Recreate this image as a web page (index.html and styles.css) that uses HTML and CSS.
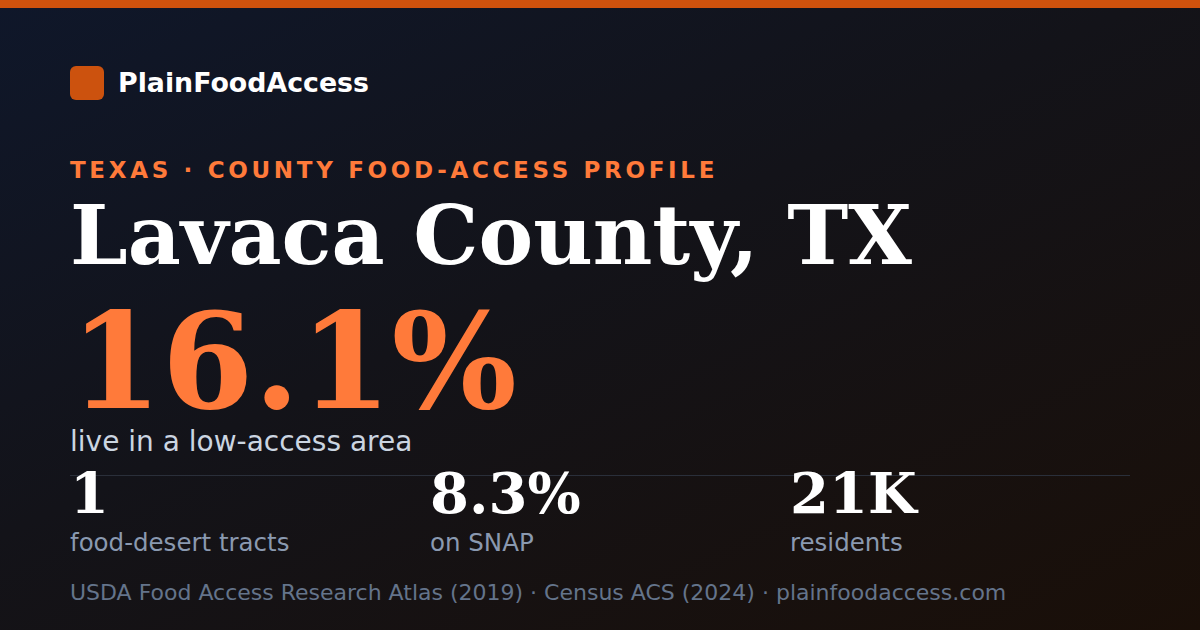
FILE: index.html
```html
<!DOCTYPE html>
<html lang="en">
<head>
<meta charset="utf-8">
<title>Lavaca County, TX – PlainFoodAccess</title>
<link rel="stylesheet" href="styles.css">
</head>
<body>
<div class="card">
  <div class="topbar"></div>
  <div class="content">
    <div class="brand">
      <div class="brand-mark"></div>
      <div class="brand-name">PlainFoodAccess</div>
    </div>
    <div class="kicker">TEXAS · COUNTY FOOD-ACCESS PROFILE</div>
    <h1 class="title">Lavaca County, TX</h1>
    <div class="hero">16.1%</div>
    <div class="hero-label">live in a low-access area</div>
    <div class="stats">
      <div class="stat">
        <div class="stat-value">1</div>
        <div class="stat-label">food-desert tracts</div>
      </div>
      <div class="stat">
        <div class="stat-value">8.3%</div>
        <div class="stat-label">on SNAP</div>
      </div>
      <div class="stat">
        <div class="stat-value">21K</div>
        <div class="stat-label">residents</div>
      </div>
    </div>
    <div class="source">USDA Food Access Research Atlas (2019) · Census ACS (2024) · plainfoodaccess.com</div>
  </div>
</div>
</body>
</html>
```

FILE: styles.css
```css
html, body {
  margin: 0;
  padding: 0;
}
body {
  width: 1200px;
  height: 630px;
  overflow: hidden;
  font-family: "DejaVu Sans", "Liberation Sans", sans-serif;
}
.card {
  width: 1200px;
  height: 630px;
  background: linear-gradient(155deg, #0f172a 0%, #131319 45%, #1a0f08 100%);
  display: flex;
  flex-direction: column;
}
.topbar {
  height: 8px;
  background: #cf520d;
  flex: none;
}
.content {
  padding: 58px 70px 0 70px;
  display: flex;
  flex-direction: column;
}
.brand {
  display: flex;
  align-items: center;
  gap: 14px;
  height: 34px;
}
.brand-mark {
  width: 34px;
  height: 34px;
  border-radius: 6px;
  background: #cc520e;
}
.brand-name {
  color: #ffffff;
  font-weight: bold;
  font-size: 26.8px;
  line-height: 34px;
}
.kicker {
  margin-top: 56px;
  color: #ff7a3a;
  font-weight: bold;
  font-size: 23px;
  letter-spacing: 0.16em;
  line-height: 28px;
}
.title {
  margin: 9px 0 0 0;
  color: #ffffff;
  font-family: "DejaVu Serif", "Liberation Serif", serif;
  font-weight: bold;
  font-size: 82px;
  line-height: 84px;
}
.hero {
  margin-top: 25px;
  color: #ff7a3a;
  font-family: "DejaVu Serif", "Liberation Serif", serif;
  font-weight: bold;
  font-size: 132px;
  line-height: 120px;
}
.hero-label {
  margin-top: 2px;
  color: #cbd5e1;
  font-size: 28px;
  line-height: 36px;
}
.stats {
  margin-top: 15px;
  border-top: 1px solid #2a2f3a;
  display: grid;
  grid-template-columns: repeat(3, 360px);
}
.stat-value {
  color: #ffffff;
  font-family: "DejaVu Serif", "Liberation Serif", serif;
  font-weight: bold;
  font-size: 56px;
  line-height: 50px;
  margin-top: -8px;
}
.stat-label {
  color: #8a99b0;
  font-size: 24.5px;
  line-height: 30px;
  margin-top: 10px;
}
.source {
  margin-top: 20px;
  color: #64748b;
  font-size: 22px;
  line-height: 30px;
}
```
